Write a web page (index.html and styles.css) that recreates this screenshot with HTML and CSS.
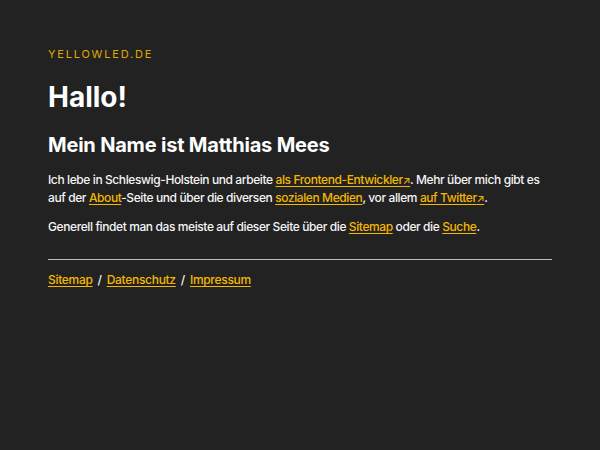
FILE: index.html
```html
<!DOCTYPE html>
<html lang="de">
<head>
<meta charset="utf-8">
<title>yellowled.de</title>
<link rel="stylesheet" href="styles.css">
</head>
<body>
<div class="page">
  <header class="site-header">
    <a class="logo" href="#">yellowled.de</a>
  </header>
  <main class="content">
    <h1 class="title">Hallo!</h1>
    <h2 class="subtitle">Mein Name ist Matthias Mees</h2>
    <p class="text">Ich lebe in Schleswig-Holstein und arbeite <a href="#">als Frontend-Entwickler<span class="ext">↗</span></a>. Mehr über mich gibt es auf der <a href="#">About</a>-Seite und über die diversen <a href="#">sozialen Medien</a>, vor allem <a href="#">auf Twitter<span class="ext">↗</span></a>.</p>
    <p class="text">Generell findet man das meiste auf dieser Seite über die <a href="#">Sitemap</a> oder die <a href="#">Suche</a>.</p>
  </main>
  <footer class="site-footer">
    <nav class="footer-nav">
      <a href="#">Sitemap</a><span class="sep">/</span><a href="#">Datenschutz</a><span class="sep">/</span><a href="#">Impressum</a>
    </nav>
  </footer>
</div>
</body>
</html>
```
FILE: styles.css
```css
html, body {
  margin: 0;
  padding: 0;
  background: #222222;
  color: #f5f5f5;
  font-family: Inter, "Liberation Sans", sans-serif;
}
.page {
  padding: 47px 48px 0;
}
a {
  color: #f4b800;
  text-decoration: underline;
  text-underline-offset: 2px;
  text-decoration-thickness: 1px;
}
.site-header {
  display: flex;
}
.logo {
  display: block;
  font-size: 11px;
  letter-spacing: 1.8px;
  text-transform: uppercase;
  text-decoration: none;
  color: #e0a800;
  line-height: 14px;
}
.title {
  margin: 19px 0 0;
  font-size: 28px;
  line-height: 34px;
  font-weight: 700;
  letter-spacing: 0;
  color: #ffffff;
}
.subtitle {
  margin: 18px 0 0;
  font-size: 20px;
  line-height: 26px;
  font-weight: 700;
  letter-spacing: -0.2px;
  color: #ffffff;
}
.text {
  margin: 13px 0 0;
  font-size: 12px;
  line-height: 18px;
  letter-spacing: -0.4px;
  font-weight: 500;
}
.text + .text {
  margin-top: 11px;
}
.ext {
  font-size: 10px;
}
.site-footer {
  margin-top: 23px;
  border-top: 1px solid #bdbdbd;
  padding-top: 11px;
}
.footer-nav {
  font-size: 12px;
  line-height: 18px;
  letter-spacing: -0.3px;
  font-weight: 500;
}
.sep {
  margin: 0 5px;
}
```
